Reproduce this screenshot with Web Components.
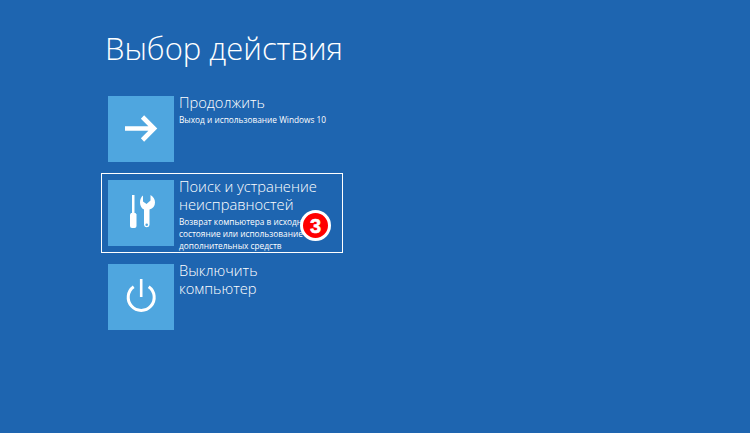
<!DOCTYPE html>
<html lang="ru">
<head>
<meta charset="utf-8">
<title>Выбор действия</title>
<style>
  html, body { margin: 0; height: 100%; }
  body { background: #1e65b0; overflow: hidden; }
</style>
</head>
<body>
<recovery-screen heading="Выбор действия">
  <recovery-option icon="arrow" label="Продолжить">Выход и использование Windows 10</recovery-option>
  <recovery-option icon="tools" label="Поиск и устранение неисправностей" selected>Возврат компьютера в исходное состояние или использование дополнительных средств<step-badge>3</step-badge></recovery-option>
  <recovery-option icon="power" label="Выключить компьютер"></recovery-option>
</recovery-screen>

<script>
const ICONS = {
  arrow: `<path d="M17 32.500H46M34.500 21L46 32.500 34.500 44" fill="none" stroke="#fff" stroke-width="4.600"/>`,
  tools: `<path d="M24 15H26.500V33H24z" fill="#fff"/>
    <path d="M23 33H27.500L28.500 34.500V46Q28.500 48 26.500 48H24Q22 48 22 46V34.500z" fill="#fff"/>
    <path fill-rule="evenodd" fill="#fff" d="M35 15.500V21.500L38.500 24 42.500 20.500V15C45.500 16.500 47 19.500 47 22.500 47 26 45 28.500 41.500 29.500V45A2.800 2.800 0 0 1 36 45V29.500C33.500 28.500 32 25.500 32 22.500 32 19.500 33 17 35 15.500ZM38.700 43.400A1.300 1.300 0 1 0 38.700 46 1.300 1.300 0 1 0 38.700 43.400Z"/>`,
  power: `<path d="M33.200 15V33" fill="none" stroke="#fff" stroke-width="2.600"/>
    <path d="M25.700 22.800A13 13 0 1 0 40.700 22.800" fill="none" stroke="#fff" stroke-width="3"/>`
}

class RecoveryScreen extends HTMLElement {
  constructor() {
    super()
    this.attachShadow({ mode: 'open' })
    this.shadowRoot.innerHTML = `
      <style>
        :host {
          display: block;
          padding: 24px 0 0 101px;
          font-family: "Open Sans", "Noto Sans", sans-serif;
          color: #fff;
        }
        h1 {
          margin: 0 0 16px 4px;
          font-size: 31px;
          line-height: 49px;
          font-weight: 300;
          white-space: nowrap;
        }
        .list {
          display: flex;
          flex-direction: column;
          gap: 4px;
          width: 242px;
        }
      </style>
      <h1></h1>
      <div class="list"><slot></slot></div>
    `
  }

  connectedCallback() {
    this.shadowRoot.querySelector('h1').textContent = this.getAttribute('heading')
  }
}

class RecoveryOption extends HTMLElement {
  constructor() {
    super()
    this.attachShadow({ mode: 'open' })
    this.shadowRoot.innerHTML = `
      <style>
        :host {
          display: flex;
          gap: 5px;
          position: relative;
          box-sizing: border-box;
          height: 80px;
          padding: 6px;
          border: 1px solid transparent;
        }
        :host([selected]) {
          border-color: #fff;
        }
        .tile {
          flex: none;
          width: 66px;
          height: 66px;
          background: #4fa6df;
        }
        svg { display: block; }
        .text { margin-top: -3px; }
        .label {
          max-width: 150px;
          font-size: 14.7px;
          line-height: 18px;
          font-weight: 300;
        }
        .desc {
          margin-top: 3px;
          font-size: 8.3px;
          line-height: 12px;
          font-weight: 400;
        }
      </style>
      <div class="tile"><svg width="66" height="66" viewBox="0 0 66 66"></svg></div>
      <div class="text">
        <div class="label"></div>
        <div class="desc"><slot></slot></div>
      </div>
    `
  }

  connectedCallback() {
    this.shadowRoot.querySelector('svg').innerHTML = ICONS[this.getAttribute('icon')]
    this.shadowRoot.querySelector('.label').textContent = this.getAttribute('label')
  }
}

class StepBadge extends HTMLElement {
  constructor() {
    super()
    this.attachShadow({ mode: 'open' })
    this.shadowRoot.innerHTML = `
      <style>
        :host {
          position: absolute;
          left: 198px;
          top: 36px;
          box-sizing: border-box;
          display: flex;
          align-items: center;
          justify-content: center;
          width: 31px;
          height: 31px;
          border: 3px solid #fff;
          border-radius: 50%;
          background: #f00;
          color: #fff;
          font-family: "Liberation Sans", sans-serif;
          font-size: 20px;
          font-weight: 700;
          -webkit-text-stroke: 0.5px #fff;
        }
      </style>
      <slot></slot>
    `
  }
}

customElements.define('recovery-screen', RecoveryScreen)
customElements.define('recovery-option', RecoveryOption)
customElements.define('step-badge', StepBadge)
</script>
</body>
</html>
